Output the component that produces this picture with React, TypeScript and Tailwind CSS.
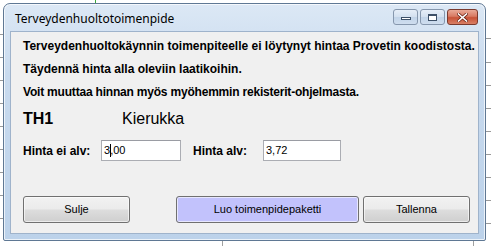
import React from "react";

function WinButton({ label, purple, w }: { label: string; purple?: boolean; w: string }) {
  return (
    <div
      className={`${w} h-[27px] rounded-[3px] border border-[#707070] p-px shadow-[inset_0_0_0_1px_rgba(255,255,255,0.6)] ${
        purple
          ? "bg-[#c2c2fc]"
          : "bg-[linear-gradient(to_bottom,#f2f2f2_0%,#ebebeb_48%,#dddddd_52%,#cfcfcf_100%)]"
      } flex items-center justify-center text-[11px] text-black font-['Liberation_Sans',sans-serif]`}
    >
      {label}
    </div>
  );
}

export default function App() {
  const rightLines = [38, 62, 85, 108, 131, 154, 177, 200, 223];
  const leftLines = [34, 57, 80, 103, 126, 149, 172, 195, 218];
  return (
    <div className="relative w-[491px] h-[246px] bg-white overflow-hidden font-['Liberation_Sans',sans-serif]">
      {/* background desktop/grid behind window */}
      <div className="absolute left-[95px] top-0 w-px h-[4px] bg-[#3aa83a]" />
      <div className="absolute left-[222px] top-[240px] w-px h-[6px] bg-[#a0a0a0]" />
      <div className="absolute left-[473px] top-[240px] w-px h-[6px] bg-[#a0a0a0]" />
      {rightLines.map((y) => (
        <div key={"r" + y} className="absolute left-[485px] w-[6px] h-px bg-[#9a9a9a]" style={{ top: y }} />
      ))}
      {leftLines.map((y) => (
        <div key={"l" + y} className="absolute left-0 w-[3px] h-px bg-[#9a9a9a]" style={{ top: y }} />
      ))}

      {/* window */}
      <div className="absolute left-[3px] top-[3px] w-[483px] h-[238px] rounded-t-[7px] rounded-b-[2px] border border-[#5f7894] bg-[linear-gradient(to_bottom,#dce8f5_0%,#c8daee_30%,#bcd2ea_100%)] shadow-[inset_0_0_0_1px_rgba(255,255,255,0.7)] flex flex-col">
        {/* title bar */}
        <div className="h-[27px] flex items-center pl-[11px] pr-[7px] shrink-0">
          <div className="flex-1 text-[12px] text-black font-['Noto_Sans',sans-serif] leading-none pt-[2px]">
            Terveydenhuoltotoimenpide
          </div>
          <div className="flex items-start gap-[2px] -mt-[1px]">
            <div className="w-[25px] h-[16px] rounded-[3px] border border-[#8697ad] bg-[linear-gradient(to_bottom,#e6eef8_0%,#d3e0ef_50%,#c1d3e8_51%,#cfdeef_100%)] flex items-end justify-center pb-[4px]">
              <div className="w-[10px] h-[3px] bg-white border border-[#3d5068]" />
            </div>
            <div className="w-[25px] h-[16px] rounded-[3px] border border-[#8697ad] bg-[linear-gradient(to_bottom,#e6eef8_0%,#d3e0ef_50%,#c1d3e8_51%,#cfdeef_100%)] flex items-center justify-center">
              <div className="w-[9px] h-[7px] border border-[#3d5068] border-t-[2px] bg-white" />
            </div>
            <div className="w-[31px] h-[16px] rounded-[3px] border border-[#7a3a2e] bg-[linear-gradient(to_bottom,#e9a997_0%,#d87a63_45%,#c75237_55%,#d98066_100%)] flex items-center justify-center">
              <svg width="11" height="9" viewBox="0 0 11 9">
                <path d="M1.5 1 L9.5 8 M9.5 1 L1.5 8" stroke="#6a2518" strokeWidth="3" strokeLinecap="square" />
                <path d="M1.5 1 L9.5 8 M9.5 1 L1.5 8" stroke="#ffffff" strokeWidth="1.6" strokeLinecap="square" />
              </svg>
            </div>
          </div>
        </div>

        {/* client area */}
        <div className="mx-[6px] mb-[6px] flex-1 bg-[#f0f0f0] border border-[#9fb3cb] pl-[12px] pr-[4px] pt-[3px] flex flex-col text-black">
          <div className="h-[23px] leading-[23px] text-[12px] font-bold whitespace-nowrap">
            Terveydenhuoltokäynnin toimenpiteelle ei löytynyt hintaa Provetin koodistosta.
          </div>
          <div className="h-[23px] leading-[23px] text-[12px] font-bold">
            Täydennä hinta alla oleviin laatikoihin.
          </div>
          <div className="h-[23px] leading-[23px] text-[12px] font-bold tracking-[-0.2px]">
            Voit muuttaa hinnan myös myöhemmin rekisterit-ohjelmasta.
          </div>
          <div className="h-[26px] flex items-center text-[16px] mt-[2px]">
            <span className="font-bold w-[99px]">TH1</span>
            <span>Kierukka</span>
          </div>
          <div className="flex items-center mt-[8px] h-[21px] text-[12px]">
            <span className="font-bold w-[78px]">Hinta ei alv:</span>
            <div className="w-[80px] h-[21px] bg-white border border-[#abadb3] border-t-[#9a9ca3] flex items-center pl-[2px] text-[11px]">
              3<span className="inline-block w-px h-[13px] bg-black mx-[-0.5px]" />,00
            </div>
            <span className="font-bold ml-[12px] w-[70px]">Hinta alv:</span>
            <div className="w-[78px] h-[21px] bg-white border border-[#abadb3] border-t-[#9a9ca3] flex items-center pl-[2px] text-[11px]">
              3,72
            </div>
          </div>
          <div className="flex items-center mt-[35px]">
            <WinButton label="Sulje" w="w-[107px]" />
            <div className="w-[46px]" />
            <WinButton label="Luo toimenpidepaketti" w="w-[183px]" purple />
            <div className="w-[4px]" />
            <WinButton label="Tallenna" w="w-[107px]" />
          </div>
        </div>
      </div>
    </div>
  );
}
